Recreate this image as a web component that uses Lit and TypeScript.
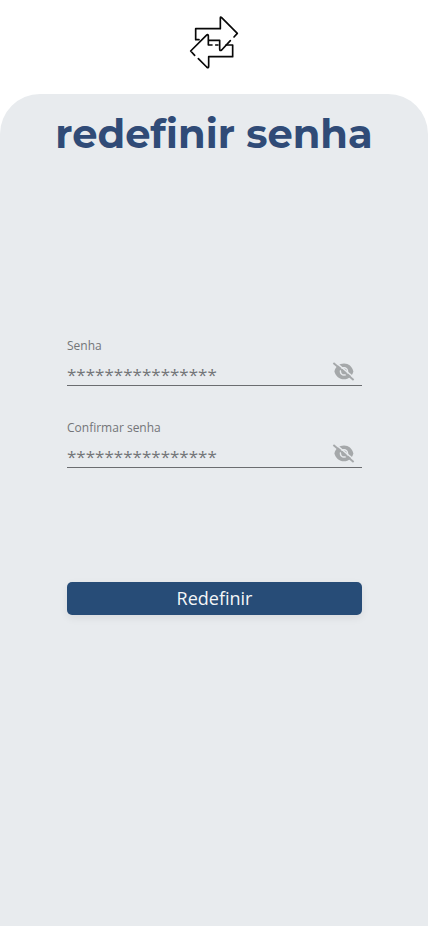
import { LitElement, html, css } from "lit";
import { customElement, property } from "lit/decorators.js";

@customElement("password-field")
class PasswordField extends LitElement {
  @property() label = "";
  static styles = css`
    :host { display: block; height: 48px; border-bottom: 1px solid #6b6d70; color: #737578; }
    .label { font-size: 12px; line-height: 17px; height: 25px; }
    .row { display: flex; justify-content: space-between; height: 23px; }
    .value { font-size: 17px; line-height: 25px; }
    svg { width: 24px; height: 24px; margin: -3px 7px 0 0; }
  `;
  render() {
    return html`
      <div class="label">${this.label}</div>
      <div class="row">
        <span class="value">****************</span>
        <svg viewBox="0 0 24 24" fill="none">
          <path fill="#a5a8aa" fill-rule="evenodd" d="M3.4 12.4C4.8 7.6 8.2 4.6 13 4.6S21 7.6 22.4 12.4C21 17.2 17.8 20.2 13 20.2S4.8 17.2 3.4 12.4ZM13 8.1a4.3 4.3 0 1 0 0 8.6a4.3 4.3 0 0 0 0-8.6Z"/>
          <circle cx="13" cy="12.4" r="2.8" fill="#a5a8aa"/>
          <path stroke="#e8ebee" stroke-width="1.5" d="M4 2.9L23.8 19.2"/>
          <path stroke="#a5a8aa" stroke-width="1.9" d="M2.4 4.1L22.6 20.9"/>
        </svg>
      </div>`;
  }
}

@customElement("app-root")
class AppRoot extends LitElement {
  static styles = css`
    :host { display: flex; flex-direction: column; height: 926px; background: #fff; font-family: "Open Sans", "Noto Sans", sans-serif; overflow: hidden; }
    header { height: 94px; flex: none; display: flex; justify-content: center; box-sizing: border-box; padding-top: 8px; }
    header svg { width: 70px; height: 70px; margin-left: 2px; }
    main { flex: 1; background: #e8ebee; border-radius: 40px 40px 0 0; display: flex; flex-direction: column; }
    h1 { margin: 15px 0 0; height: 50px; line-height: 50px; text-align: center; white-space: nowrap; color: #304b77; font-family: Montserrat, Inter, sans-serif; font-size: 40px; font-weight: 700; }
    form { margin: 178px 66px 0 67px; display: flex; flex-direction: column; gap: 33px; }
    button { margin-top: 81px; height: 33px; border: 0; border-radius: 5px; padding: 0; background: #274c77; color: #f4f6f8; font: 18px/33px "Open Sans", "Noto Sans", sans-serif; box-shadow: 0 3px 8px rgba(0, 0, 0, 0.07); }
  `;
  render() {
    return html`
      <header>
        <svg viewBox="0 0 210 210" fill="none" stroke="#080808" stroke-width="5" stroke-linecap="round" stroke-linejoin="round">
          <path d="M57 95H47V62H121V30Q121 25 125 29L172 76L162 87M151 98L125 126Q119 130 119 123V97H87"/>
          <path d="M96 111H85V83Q84 77 79 82L32 129L44 142M55 152L80 177Q86 182 86 175V146H158V111H138M107 111H114"/>
        </svg>
      </header>
      <main>
        <h1>redefinir senha</h1>
        <form>
          <password-field label="Senha"></password-field>
          <password-field label="Confirmar senha"></password-field>
          <button type="button">Redefinir</button>
        </form>
      </main>`;
  }
}
